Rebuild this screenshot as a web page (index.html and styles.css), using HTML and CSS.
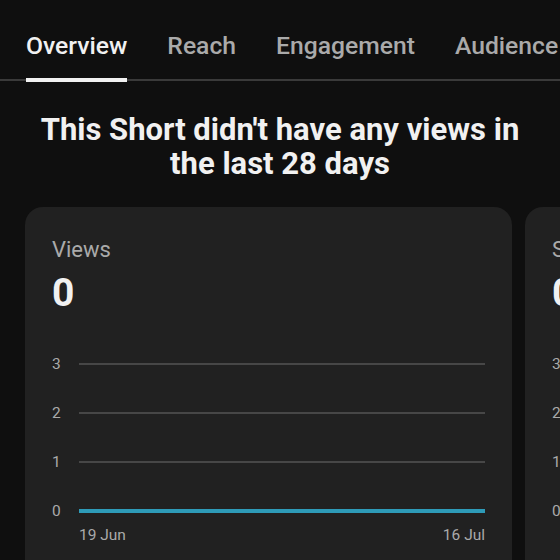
FILE: index.html
```html
<!DOCTYPE html>
<html>
<head>
<meta charset="utf-8">
<link rel="stylesheet" href="styles.css">
</head>
<body>
<nav class="tabs">
  <div class="tab active">Overview</div>
  <div class="tab">Reach</div>
  <div class="tab">Engagement</div>
  <div class="tab">Audience</div>
</nav>
<h1 class="headline">This Short didn't have any views in<br>the last 28 days</h1>
<div class="cards">
  <section class="card">
    <div class="card-title">Views</div>
    <div class="card-value">0</div>
    <div class="chart">
      <div class="row"><span class="ylabel">3</span><span class="grid"></span></div>
      <div class="row"><span class="ylabel">2</span><span class="grid"></span></div>
      <div class="row"><span class="ylabel">1</span><span class="grid"></span></div>
      <div class="row"><span class="ylabel">0</span><span class="grid data"></span></div>
      <div class="dates"><span>19 Jun</span><span>16 Jul</span></div>
    </div>
  </section>
  <section class="card">
    <div class="card-title">Subscribers</div>
    <div class="card-value">0</div>
    <div class="chart">
      <div class="row"><span class="ylabel">3</span><span class="grid"></span></div>
      <div class="row"><span class="ylabel">2</span><span class="grid"></span></div>
      <div class="row"><span class="ylabel">1</span><span class="grid"></span></div>
      <div class="row"><span class="ylabel">0</span><span class="grid data"></span></div>
      <div class="dates"><span>19 Jun</span><span>16 Jul</span></div>
    </div>
  </section>
</div>
</body>
</html>
```
FILE: styles.css
```css
html, body {
  margin: 0;
  padding: 0;
  background: #0f0f0f;
  font-family: Roboto, "Liberation Sans", sans-serif;
  color: #f1f1f1;
  width: 560px;
  height: 560px;
  overflow: hidden;
}
.tabs {
  display: flex;
  gap: 40px;
  padding-left: 26px;
  height: 79px;
  border-bottom: 2px solid #3a3a3a;
  white-space: nowrap;
}
.tab {
  font-size: 24.7px;
  font-weight: 500;
  line-height: 30px;
  padding-top: 31px;
  color: #aaaaaa;
  box-sizing: border-box;
  height: 79px;
}
.tab.active {
  color: #f1f1f1;
  height: 82px;
  border-bottom: 4px solid #f1f1f1;
  margin-bottom: -3px;
}
.headline {
  margin: 32px 0 0;
  text-align: center;
  font-size: 31px;
  font-weight: 700;
  line-height: 34px;
  color: #f1f1f1;
}
.cards {
  display: flex;
  gap: 13px;
  margin-top: 26px;
  padding-left: 25px;
}
.card {
  flex: 0 0 487px;
  box-sizing: border-box;
  height: 400px;
  background: #212121;
  border-radius: 18px;
  padding: 30px 27px 0;
}
.card-title {
  font-size: 22px;
  line-height: 26px;
  color: #aaaaaa;
  white-space: nowrap;
}
.card-value {
  margin-top: 8px;
  font-size: 39px;
  font-weight: 700;
  line-height: 44px;
  color: #f1f1f1;
}
.chart {
  margin-top: 39px;
  display: flex;
  flex-direction: column;
  gap: 29px;
}
.row {
  display: flex;
  align-items: center;
  height: 20px;
}
.ylabel {
  width: 27px;
  flex: 0 0 27px;
  font-size: 15.5px;
  color: #aaaaaa;
  line-height: 20px;
}
.grid {
  flex: 1;
  height: 2px;
  background: #474747;
}
.grid.data {
  height: 4px;
  background: #2e9bb8;
}
.dates {
  margin-top: -25px;
  margin-left: 27px;
  display: flex;
  justify-content: space-between;
  font-size: 15.5px;
  line-height: 20px;
  color: #aaaaaa;
}
```
